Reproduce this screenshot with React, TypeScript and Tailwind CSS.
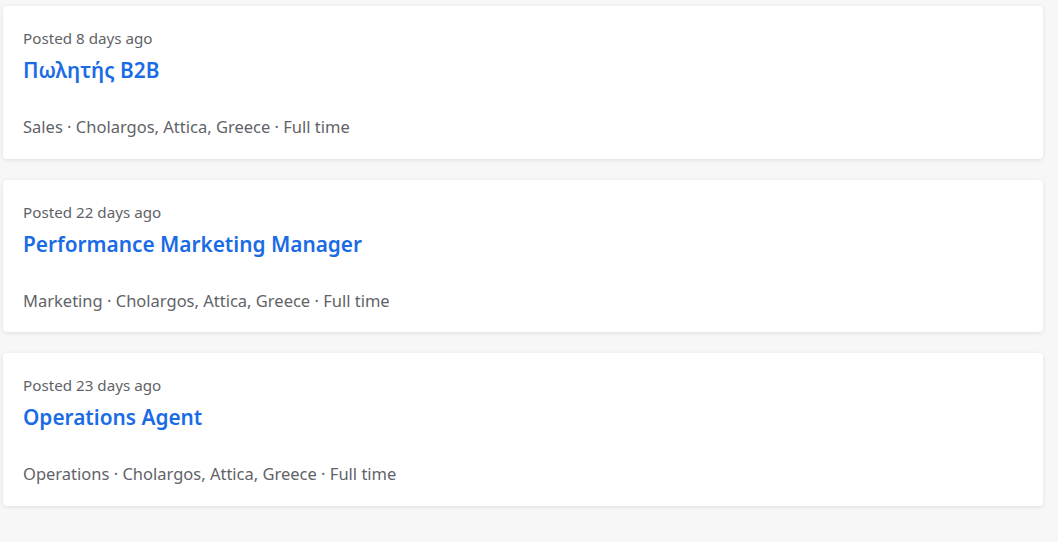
import React from "react";

const jobs = [
  { posted: "Posted 8 days ago", title: "Πωλητής B2B", meta: "Sales · Cholargos, Attica, Greece · Full time" },
  { posted: "Posted 22 days ago", title: "Performance Marketing Manager", meta: "Marketing · Cholargos, Attica, Greece · Full time" },
  { posted: "Posted 23 days ago", title: "Operations Agent", meta: "Operations · Cholargos, Attica, Greece · Full time" },
];

export default function App() {
  return (
    <div className="min-h-[542px] w-full bg-[#f7f7f7] pl-[3px] pr-[15px] pt-[6px]" style={{ fontFamily: '"Noto Sans", "Segoe UI", sans-serif' }}>
      <div className="flex flex-col gap-[21px]">
        {jobs.map((j) => (
          <div key={j.title} className="h-[152.5px] rounded-[4px] bg-white px-[20px] pt-[23px] shadow-[0_1px_4px_rgba(0,0,0,0.10)]">
            <div className="text-[15.2px] leading-[18px] text-[#5f6368]">{j.posted}</div>
            <div className="mt-[9px] text-[20.8px] font-semibold leading-[28px] text-[#1a6be6]">{j.title}</div>
            <div className="mt-[32px] text-[16.5px] leading-[22px] text-[#5f6368]">{j.meta}</div>
          </div>
        ))}
      </div>
    </div>
  );
}
